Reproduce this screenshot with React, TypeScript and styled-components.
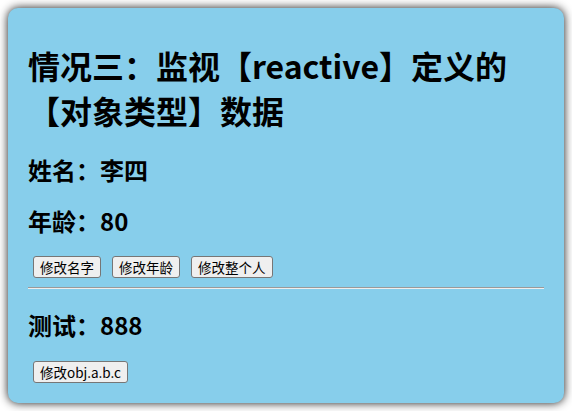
import React, { useState } from "react";
import styled, { createGlobalStyle } from "styled-components";

const GlobalStyle = createGlobalStyle`
  html, body {
    margin: 0;
    background: #ffffff;
  }

  body {
    font-family: "Noto Sans CJK SC", "Noto Sans", sans-serif;
    color: #000000;
  }
`;

const Page = styled.div`
  padding: 8px;
`;

const Person = styled.div`
  display: flex;
  flex-direction: column;
  align-items: stretch;

  padding: 20px;
  border-radius: 10px;
  background-color: skyblue;
  box-shadow: 0 0 10px rgba(0, 0, 0, 0.9);
`;

const Title = styled.h1`
  margin: 15px 0 0;
  font-size: 32px;
  line-height: 45px;
  font-weight: bold;
`;

const Field = styled.h2<{ $gap?: number }>`
  margin: ${({ $gap = 20 }) => $gap}px 0 0;
  font-size: 24px;
  line-height: 31px;
  font-weight: bold;
`;

const ButtonRow = styled.div<{ $gap?: number }>`
  display: flex;
  gap: 11px;

  margin-top: ${({ $gap = 20 }) => $gap}px;
  padding: 0 5px;
`;

const Button = styled.button`
  height: 22px;
  padding: 0 6px;

  border: 1px solid #767676;
  border-radius: 3px;
  background: #efefef;
  color: #000000;

  font-family: "Noto Sans CJK SC", "Noto Sans", sans-serif;
  font-size: 13.5px;
  line-height: 20px;
  white-space: nowrap;
  cursor: pointer;
`;

const Divider = styled.hr`
  margin: 9px 0 0;
  height: 0;
  border: none;
  border-top: 1px solid #9a9a9a;
  border-bottom: 1px solid #eeeeee;
`;

type Person = { name: string; age: number };

const App = () => {
  const [person, setPerson] = useState<Person>({ name: "李四", age: 80 });
  const [obj, setObj] = useState({ a: { b: { c: 888 } } });

  return (
    <Page>
      <GlobalStyle />
      <Person>
        <Title>情况三：监视【reactive】定义的【对象类型】数据</Title>
        <Field $gap={21}>姓名：{person.name}</Field>
        <Field>年龄：{person.age}</Field>
        <ButtonRow>
          <Button onClick={() => setPerson({ ...person, name: person.name + "~" })}>修改名字</Button>
          <Button onClick={() => setPerson({ ...person, age: person.age + 1 })}>修改年龄</Button>
          <Button onClick={() => setPerson({ name: "许利", age: 90 })}>修改整个人</Button>
        </ButtonRow>
        <Divider />
        <Field>测试：{obj.a.b.c}</Field>
        <ButtonRow $gap={21}>
          <Button onClick={() => setObj({ a: { b: { c: 999 } } })}>修改obj.a.b.c</Button>
        </ButtonRow>
      </Person>
    </Page>
  );
};

export default App;
